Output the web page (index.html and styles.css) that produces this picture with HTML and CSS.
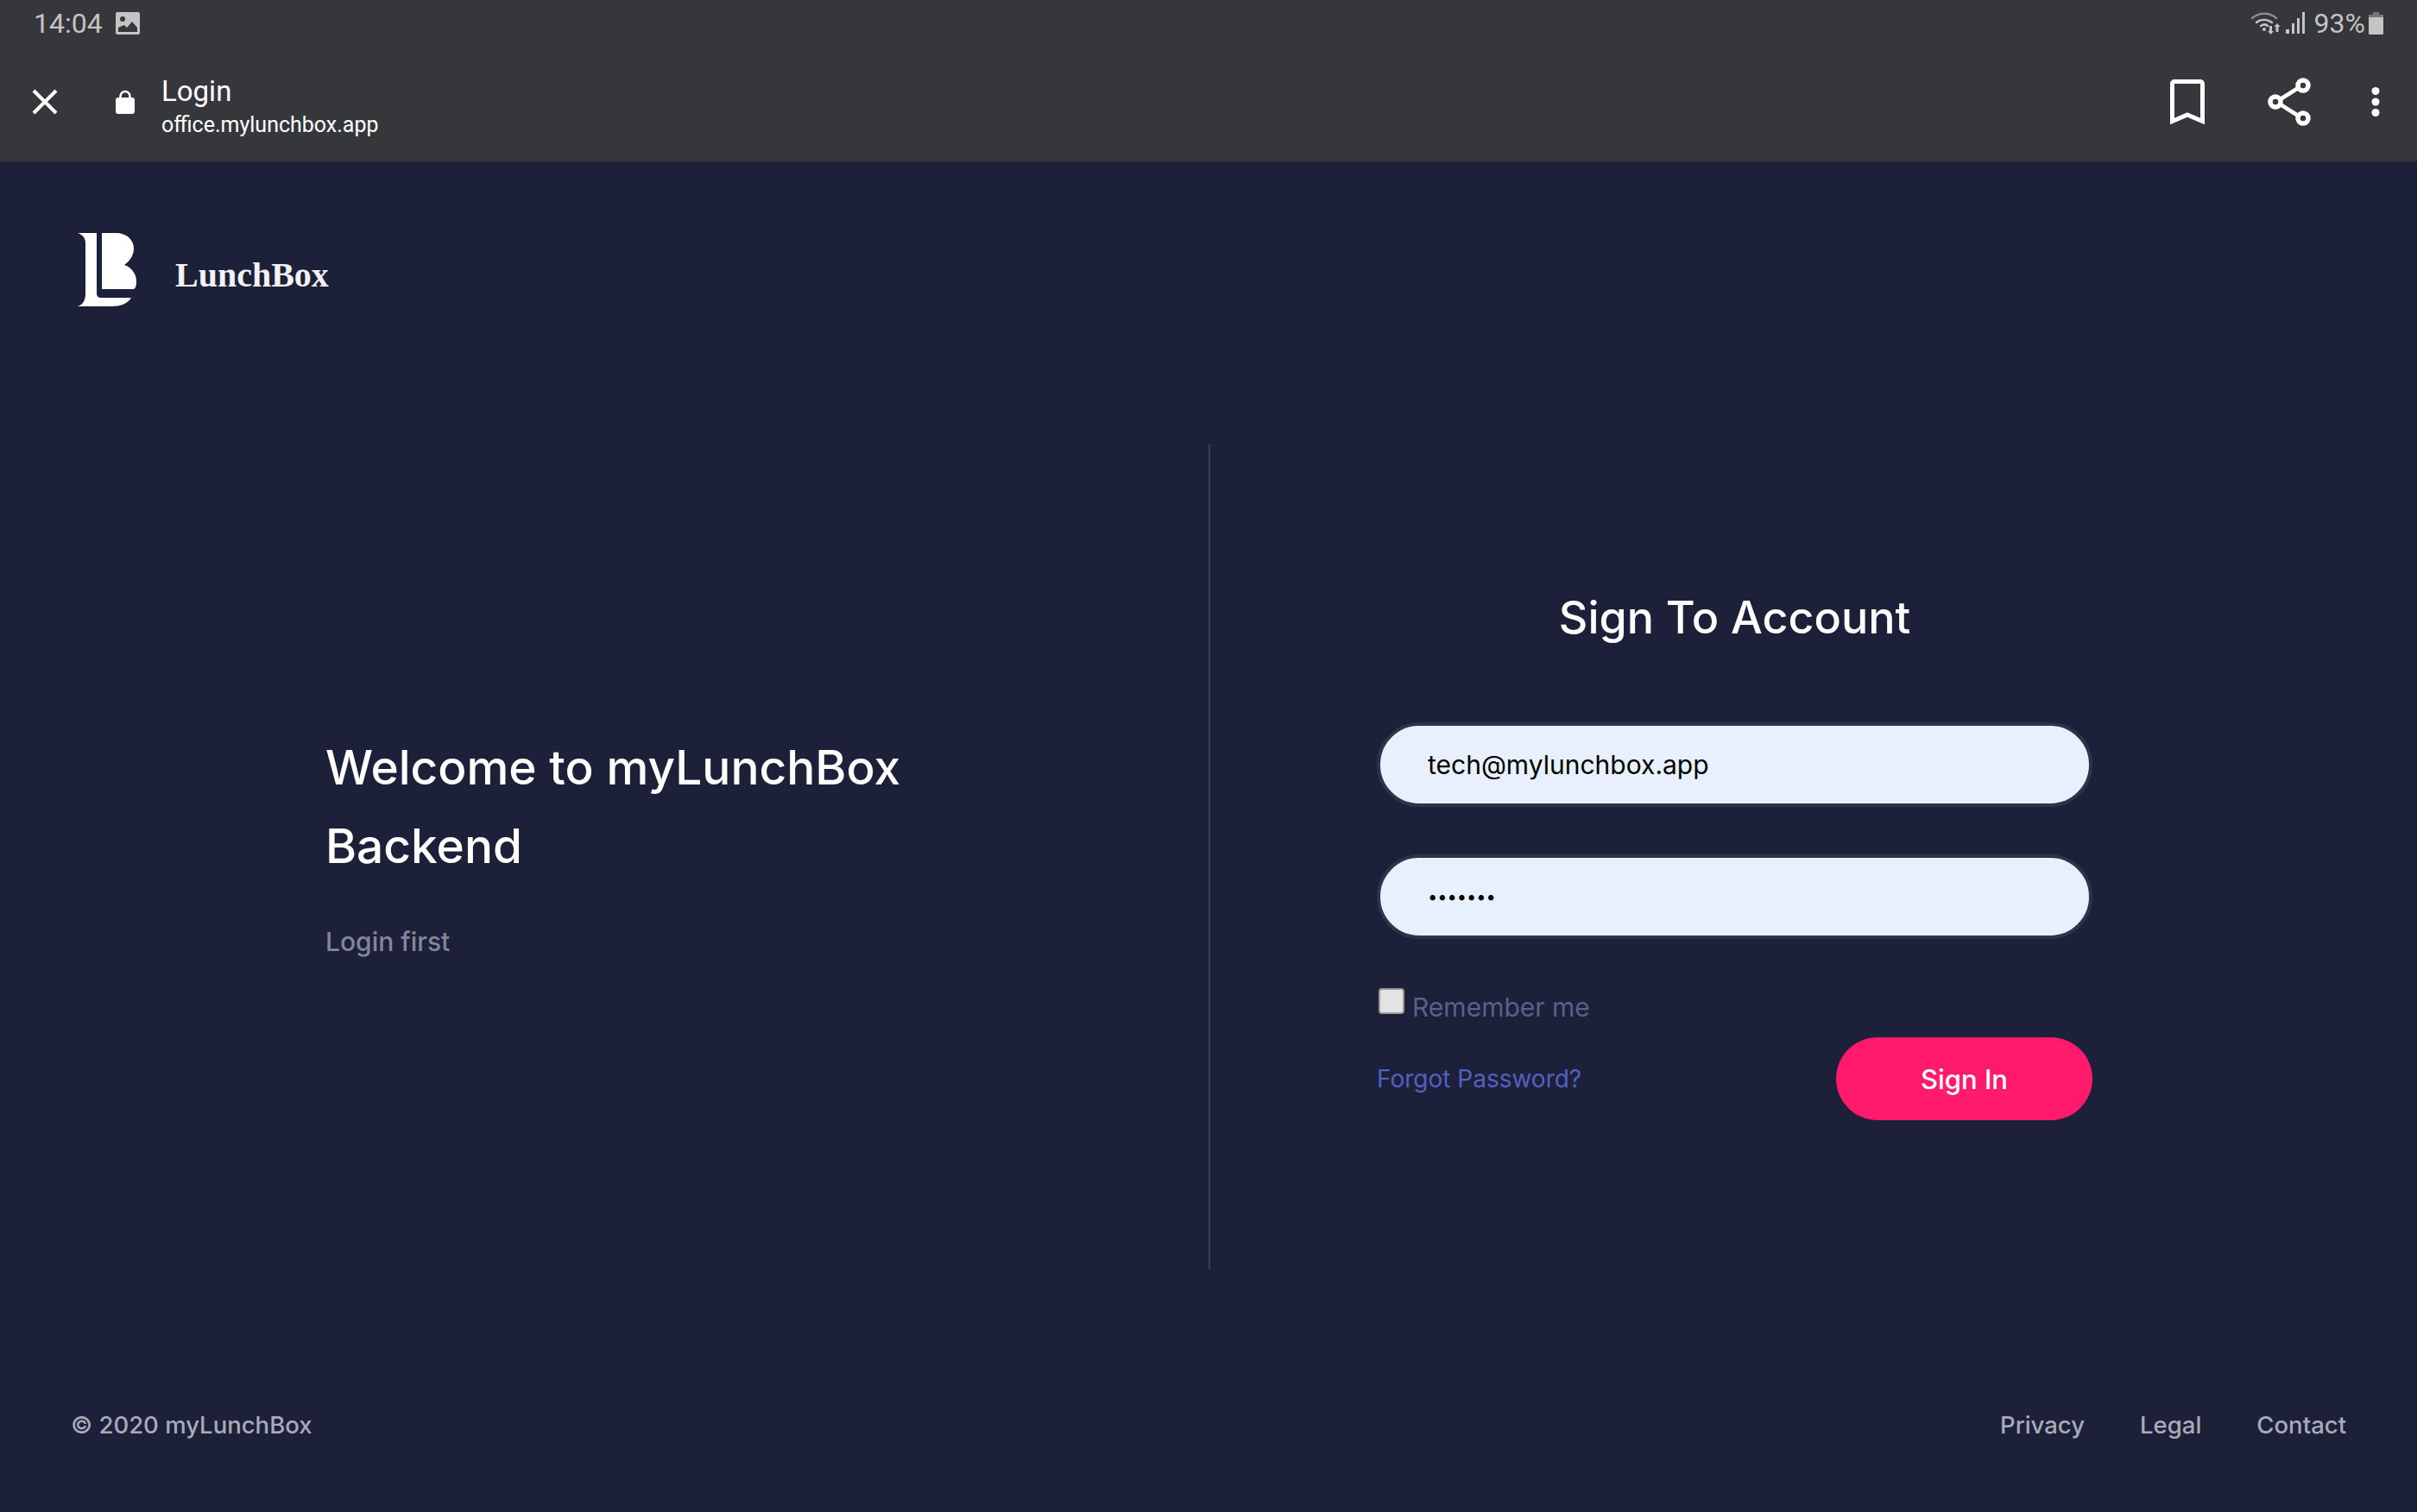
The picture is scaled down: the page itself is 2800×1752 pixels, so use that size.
FILE: index.html
```html
<!DOCTYPE html>
<html lang="en">
<head>
    <meta charset="UTF-8">
    <meta name="viewport" content="width=device-width, initial-scale=1.0">
    <title>Login</title>
    <link rel="stylesheet" href="styles.css">
</head>
<body>
    <div class="browser-bar">
        <div class="status-row">
            <div class="status-left">
                <span class="time">14:04</span>
                <svg class="icon-image" viewBox="0 0 28 26"><path fill="#c4c4c4" fill-rule="evenodd" d="M2 0h24a2 2 0 0 1 2 2v22a2 2 0 0 1-2 2H2a2 2 0 0 1-2-2V2a2 2 0 0 1 2-2zM3 18v5h22v-5l-6-7-6 7-3-3zM8 5a3 3 0 1 0 0 6 3 3 0 0 0 0-6z"/></svg>
            </div>
            <div class="status-right">
                <svg class="icon-wifi" viewBox="0 0 34 26"><g fill="none" stroke-linecap="round"><path stroke="#8c8c8e" stroke-width="2.5" d="M1 7C9 0 21 0 29 7"/><path stroke="#c4c4c4" stroke-width="2.5" d="M6 12c5-4 12-4 18 0"/><path stroke="#c4c4c4" stroke-width="2.5" d="M11 16c3-2 6-2 8 0"/></g><circle cx="15" cy="20" r="2" fill="#c4c4c4"/><path fill="#c4c4c4" d="M21 16h3v6h2l-3.500 4-3.500-4h2zM30 13l3.500 4h-2v6h-3v-6h-2z"/></svg>
                <svg class="icon-signal" viewBox="0 0 23 26"><path fill="#c4c4c4" d="M0 20h4v5H0zM7 13h3v12H7zM13 7h3v18h-3zM19 0h3v25h-3z"/></svg>
                <span class="battery-text">93%</span>
                <svg class="icon-battery" viewBox="0 0 17 26"><path fill="#77787a" d="M5 0h7v3h5v5H0V3h5z"/><path fill="#c4c4c4" d="M0 6h17v19a1 1 0 0 1-1 1H1a1 1 0 0 1-1-1z"/></svg>
            </div>
        </div>
        <div class="toolbar">
            <svg class="icon-close" viewBox="0 0 30 30"><path stroke="#fff" stroke-width="4" d="M2 2l26 26M28 2L2 28"/></svg>
            <svg class="icon-lock" viewBox="0 0 22 28"><path fill="none" stroke="#fff" stroke-width="2.500" d="M5.500 12V7.500a5.500 5.500 0 0 1 11 0V12"/><rect y="9" width="22" height="19" rx="3" fill="#fff"/></svg>
            <div class="page-title">
                <div class="title-main">Login</div>
                <div class="title-url">office.mylunchbox.app</div>
            </div>
            <svg class="icon-bookmark" viewBox="0 0 40 52"><path fill="none" stroke="#fff" stroke-width="5" d="M2.500 48.500V5a2.500 2.500 0 0 1 2.500-2.500h30A2.500 2.500 0 0 1 37.500 5v43.500L20 41z"/></svg>
            <svg class="icon-share" viewBox="0 0 52 58"><path stroke="#fff" stroke-width="4.500" d="M11 29L41 10M11 29l30 19"/><g fill="#36373b" stroke="#fff" stroke-width="5.500"><circle cx="42" cy="10" r="6"/><circle cx="10" cy="29" r="6"/><circle cx="42" cy="48" r="6"/></g></svg>
            <svg class="icon-dots" viewBox="0 0 10 34"><g fill="#fff"><circle cx="5" cy="4.500" r="4.500"/><circle cx="5" cy="17" r="4.500"/><circle cx="5" cy="29.500" r="4.500"/></g></svg>
        </div>
    </div>

    <div class="page">
        <header class="brand">
            <svg class="logo" viewBox="0 0 70 88"><path fill="#fff" d="M1 2H23V72C23 76 25 77 29 77H63C59 84 50 87 40 87H1C7 85 10 80 10 72V14C10 8 7 4 1 2Z"/><path fill="#fff" d="M29 2H45C58 2 66 10 66 20C66 28 61 35 55 39C64 42 69 50 69 58C69 63 68 66 66 67H29Z"/></svg>
            <span class="wordmark">LunchBox</span>
        </header>

        <main class="content">
            <section class="welcome">
                <h1>Welcome to myLunchBox Backend</h1>
                <p>Login first</p>
            </section>
            <section class="signin">
                <h2>Sign To Account</h2>
                <input class="field" type="text" value="tech@mylunchbox.app">
                <input class="field field-password" type="password" value="1234567">
                <label class="remember"><input type="checkbox"><span>Remember me</span></label>
                <div class="actions">
                    <a class="forgot" href="#">Forgot Password?</a>
                    <button class="button" type="button">Sign In</button>
                </div>
            </section>
        </main>

        <footer class="footer">
            <span class="copyright">© 2020 myLunchBox</span>
            <nav class="footer-links">
                <a href="#">Privacy</a>
                <a href="#">Legal</a>
                <a href="#">Contact</a>
            </nav>
        </footer>
    </div>
</body>
</html>
```

FILE: styles.css
```css
* {
    box-sizing: border-box;
}
body {
    margin: 0;
    background: #1c2039;
    font-family: 'Inter', 'Liberation Sans', sans-serif;
    color: white;
}
svg {
    display: block;
    flex: none;
}
.browser-bar {
    height: 188px;
    background: #36373b;
    border-bottom: 2px solid #2a2c35;
    font-family: 'Roboto', sans-serif;
}
.status-row {
    height: 54px;
    display: flex;
    justify-content: space-between;
    align-items: center;
    padding: 0 39px 0 39px;
    color: #c4c4c4;
}
.status-left,
.status-right {
    display: flex;
    align-items: center;
}
.time {
    font-size: 32px;
}
.icon-image {
    width: 28px;
    height: 26px;
    margin-left: 15px;
}
.icon-wifi {
    width: 34px;
    height: 26px;
}
.icon-signal {
    width: 23px;
    height: 26px;
    margin-left: 6px;
}
.battery-text {
    font-size: 32px;
    margin-left: 10px;
}
.icon-battery {
    width: 17px;
    height: 26px;
    margin-left: 4px;
}
.toolbar {
    height: 128px;
    display: flex;
    align-items: center;
}
.icon-close {
    width: 30px;
    height: 30px;
    margin-left: 37px;
}
.icon-lock {
    width: 22px;
    height: 28px;
    margin-left: 67px;
}
.page-title {
    margin-left: 31px;
    padding-top: 13px;
    flex: 1;
}
.title-main {
    font-size: 33px;
    line-height: 40px;
}
.title-url {
    font-size: 25px;
    line-height: 38px;
}
.icon-bookmark {
    width: 40px;
    height: 52px;
}
.icon-share {
    width: 52px;
    height: 58px;
    margin-left: 72px;
}
.icon-dots {
    width: 10px;
    height: 34px;
    margin-left: 69px;
    margin-right: 43px;
}
.brand {
    display: flex;
    align-items: center;
    padding: 80px 0 0 89px;
}
.logo {
    width: 70px;
    height: 88px;
}
.wordmark {
    margin: 12px 0 0 44px;
    font-family: 'Liberation Serif', serif;
    font-weight: bold;
    font-size: 40px;
    color: #f2f2f4;
}
.content {
    display: flex;
    height: 956px;
    margin-top: 159px;
}
.welcome {
    width: 1402px;
    border-right: 2px solid #3a3e55;
    padding: 0 0 32px 377px;
    display: flex;
    flex-direction: column;
    justify-content: center;
}
.welcome h1 {
    margin: 0;
    width: 760px;
    font-size: 55px;
    font-weight: 500;
    line-height: 91px;
}
.welcome p {
    margin: 45px 0 0 0;
    font-size: 30px;
    font-weight: 500;
    line-height: 40px;
    color: #83869a;
}
.signin {
    width: 829px;
    margin-left: 193px;
    padding-top: 156px;
    display: flex;
    flex-direction: column;
}
.signin h2 {
    margin: 0 0 76px 0;
    font-size: 52px;
    font-weight: 500;
    line-height: 90px;
    text-align: center;
}
.field {
    height: 98px;
    width: 100%;
    padding: 0 55px;
    border: 4px solid #2f3349;
    border-radius: 49px;
    background: #e8f0fe;
    font-family: inherit;
    font-size: 30px;
    color: black;
    outline: none;
}
.field-password {
    margin-top: 55px;
    font-size: 20px;
}
.remember {
    display: flex;
    align-items: flex-start;
    margin-top: 57px;
    font-size: 30px;
    color: #5a6188;
}
.remember input {
    appearance: none;
    width: 30px;
    height: 30px;
    margin: 0 9px 0 2px;
    background: #e4e4e4;
    border: 2px solid #9a9a9a;
    border-radius: 4px;
}
.remember span {
    line-height: 40px;
    margin-top: 2px;
}
.actions {
    display: flex;
    justify-content: space-between;
    align-items: center;
    margin-top: 15px;
}
.forgot {
    font-size: 28px;
    color: #5062c0;
    text-decoration: none;
}
.button {
    width: 297px;
    height: 96px;
    border: none;
    border-radius: 48px;
    background: #ff1a6b;
    color: white;
    font-family: inherit;
    font-size: 31px;
    font-weight: 500;
}
.footer {
    display: flex;
    justify-content: space-between;
    margin-top: 160px;
    padding: 0 82px;
    font-size: 27.500px;
    font-weight: 500;
    line-height: 40px;
    color: #a9abb8;
}
.footer-links {
    display: flex;
    gap: 64px;
}
.footer-links a {
    color: #a9abb8;
    text-decoration: none;
}
```
